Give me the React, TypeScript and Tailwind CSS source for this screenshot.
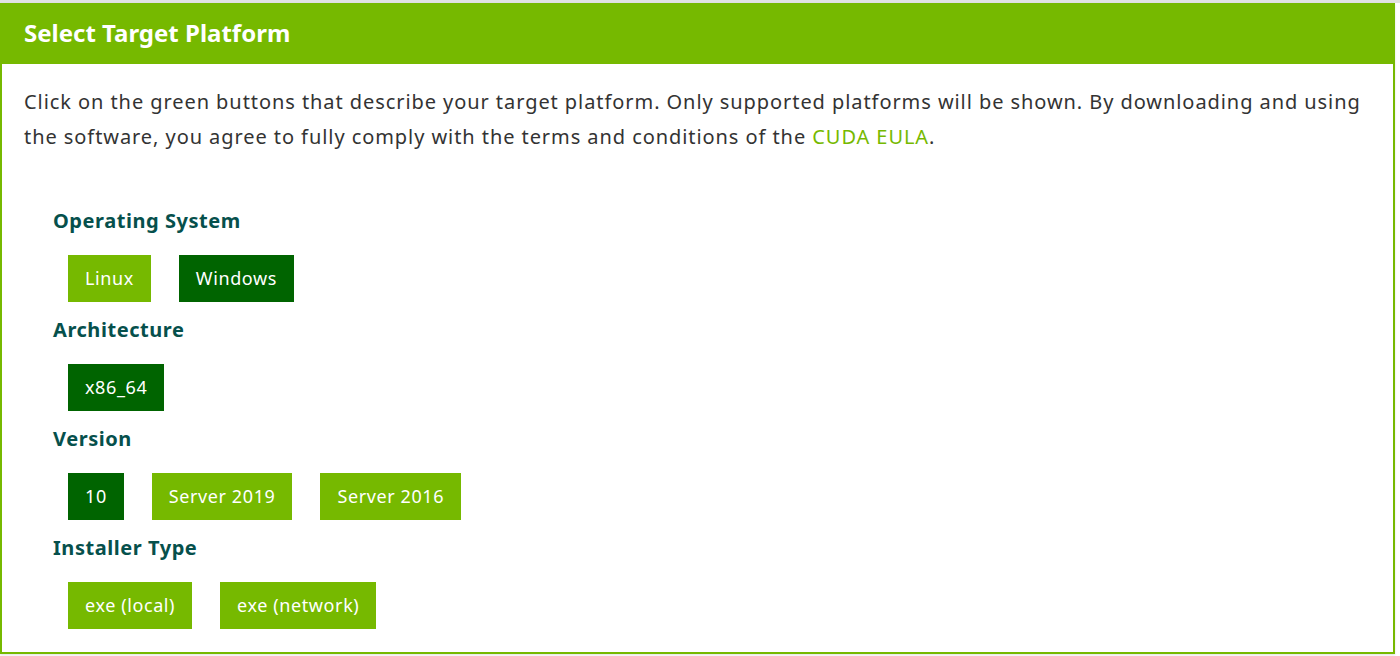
import React from "react";

type Option = { label: string; active?: boolean };

const sections: { title: string; options: Option[] }[] = [
  { title: "Operating System", options: [{ label: "Linux" }, { label: "Windows", active: true }] },
  { title: "Architecture", options: [{ label: "x86_64", active: true }] },
  {
    title: "Version",
    options: [{ label: "10", active: true }, { label: "Server 2019" }, { label: "Server 2016" }],
  },
  { title: "Installer Type", options: [{ label: "exe (local)" }, { label: "exe (network)" }] },
];

export default function App() {
  return (
    <div className="min-h-screen bg-white border-t-[3px] border-[#e2e2e2]" style={{ fontFamily: "'Noto Sans', sans-serif" }}>
      <div className="w-[1395px] border-2 border-t-0 border-[#76b900] shadow-[0_1px_2px_rgba(0,0,0,0.12)]">
        {/* header */}
        <div className="h-[61px] bg-[#76b900] px-[22px] flex items-center">
          <h2 className="text-white text-[24px] font-bold leading-[32px] -mt-[2px]">Select Target Platform</h2>
        </div>

        {/* body */}
        <div className="px-[22px] pt-[20px] pb-[23px]">
          <p className="text-[20px] leading-[35px] tracking-[0.93px] text-[#333333]">
            Click on the green buttons that describe your target platform. Only supported platforms will be shown. By
            downloading and using the software, you agree to fully comply with the terms and conditions of the{" "}
            <a className="text-[#76b900]">CUDA EULA</a>.
          </p>

          <div className="pl-[29px] pt-[53px] flex flex-col">
            {sections.map((s, i) => (
              <div key={s.title} className={i === 0 ? "" : "mt-[14px]"}>
                <div className="text-[20px] font-bold leading-[28px] tracking-[0.55px] text-[#06504c]">{s.title}</div>
                <div className="flex gap-[28px] pl-[15px] mt-[20px]">
                  {s.options.map((o) => (
                    <button
                      key={o.label}
                      className={
                        "h-[47px] px-[17px] text-[18px] tracking-[0.6px] text-white " +
                        (o.active ? "bg-[#006400]" : "bg-[#76b900]")
                      }
                    >
                      {o.label}
                    </button>
                  ))}
                </div>
              </div>
            ))}
          </div>
        </div>
      </div>
    </div>
  );
}
